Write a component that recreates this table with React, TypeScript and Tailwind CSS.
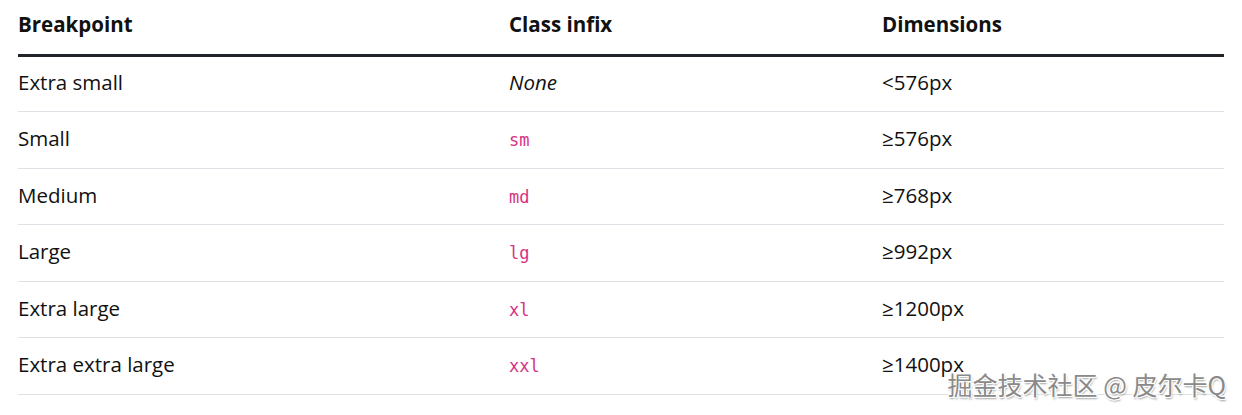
const rows: { name: string; infix: string | null; dim: string }[] = [
  { name: 'Extra small', infix: null, dim: '<576px' },
  { name: 'Small', infix: 'sm', dim: '≥576px' },
  { name: 'Medium', infix: 'md', dim: '≥768px' },
  { name: 'Large', infix: 'lg', dim: '≥992px' },
  { name: 'Extra large', infix: 'xl', dim: '≥1200px' },
  { name: 'Extra extra large', infix: 'xxl', dim: '≥1400px' },
];

export default function App() {
  return (
    <div className="relative h-[415px] w-[1242px] overflow-hidden bg-white px-[18px] text-[#111] [font-family:'Open_Sans',sans-serif]">
      <table className="w-[1206px] table-fixed border-collapse text-[20.5px]">
        <colgroup>
          <col className="w-[491px]" />
          <col className="w-[373px]" />
          <col className="w-[342px]" />
        </colgroup>
        <thead>
          <tr className="h-[55px] border-b-[3px] border-[#212529]">
            <th className="pb-[5px] text-left font-bold">Breakpoint</th>
            <th className="pb-[5px] text-left font-bold">Class infix</th>
            <th className="pb-[5px] text-left font-bold">Dimensions</th>
          </tr>
        </thead>
        <tbody>
          {rows.map((r) => (
            <tr key={r.name} className="h-[56.6px] border-b border-[#dee2e6]">
              <td className="pb-[3px]">{r.name}</td>
              <td className="pb-[3px]">
                {r.infix ? (
                  <code className="text-[17px] text-[#d63384] [font-family:'DejaVu_Sans_Mono',monospace]">
                    {r.infix}
                  </code>
                ) : (
                  <em>None</em>
                )}
              </td>
              <td className="pb-[3px]">{r.dim}</td>
            </tr>
          ))}
        </tbody>
      </table>
      <div className="absolute right-[16px] top-[366px] text-[25px] text-[#8a8a8a] [font-family:'Noto_Sans_CJK_SC',sans-serif] [text-shadow:1px_1px_0_#fff,-1px_-1px_0_#fff,1px_-1px_0_#fff,-1px_1px_0_#fff,1px_2px_2px_rgba(0,0,0,0.4)]">
        掘金技术社区 @ 皮尔卡Q
      </div>
    </div>
  );
}
